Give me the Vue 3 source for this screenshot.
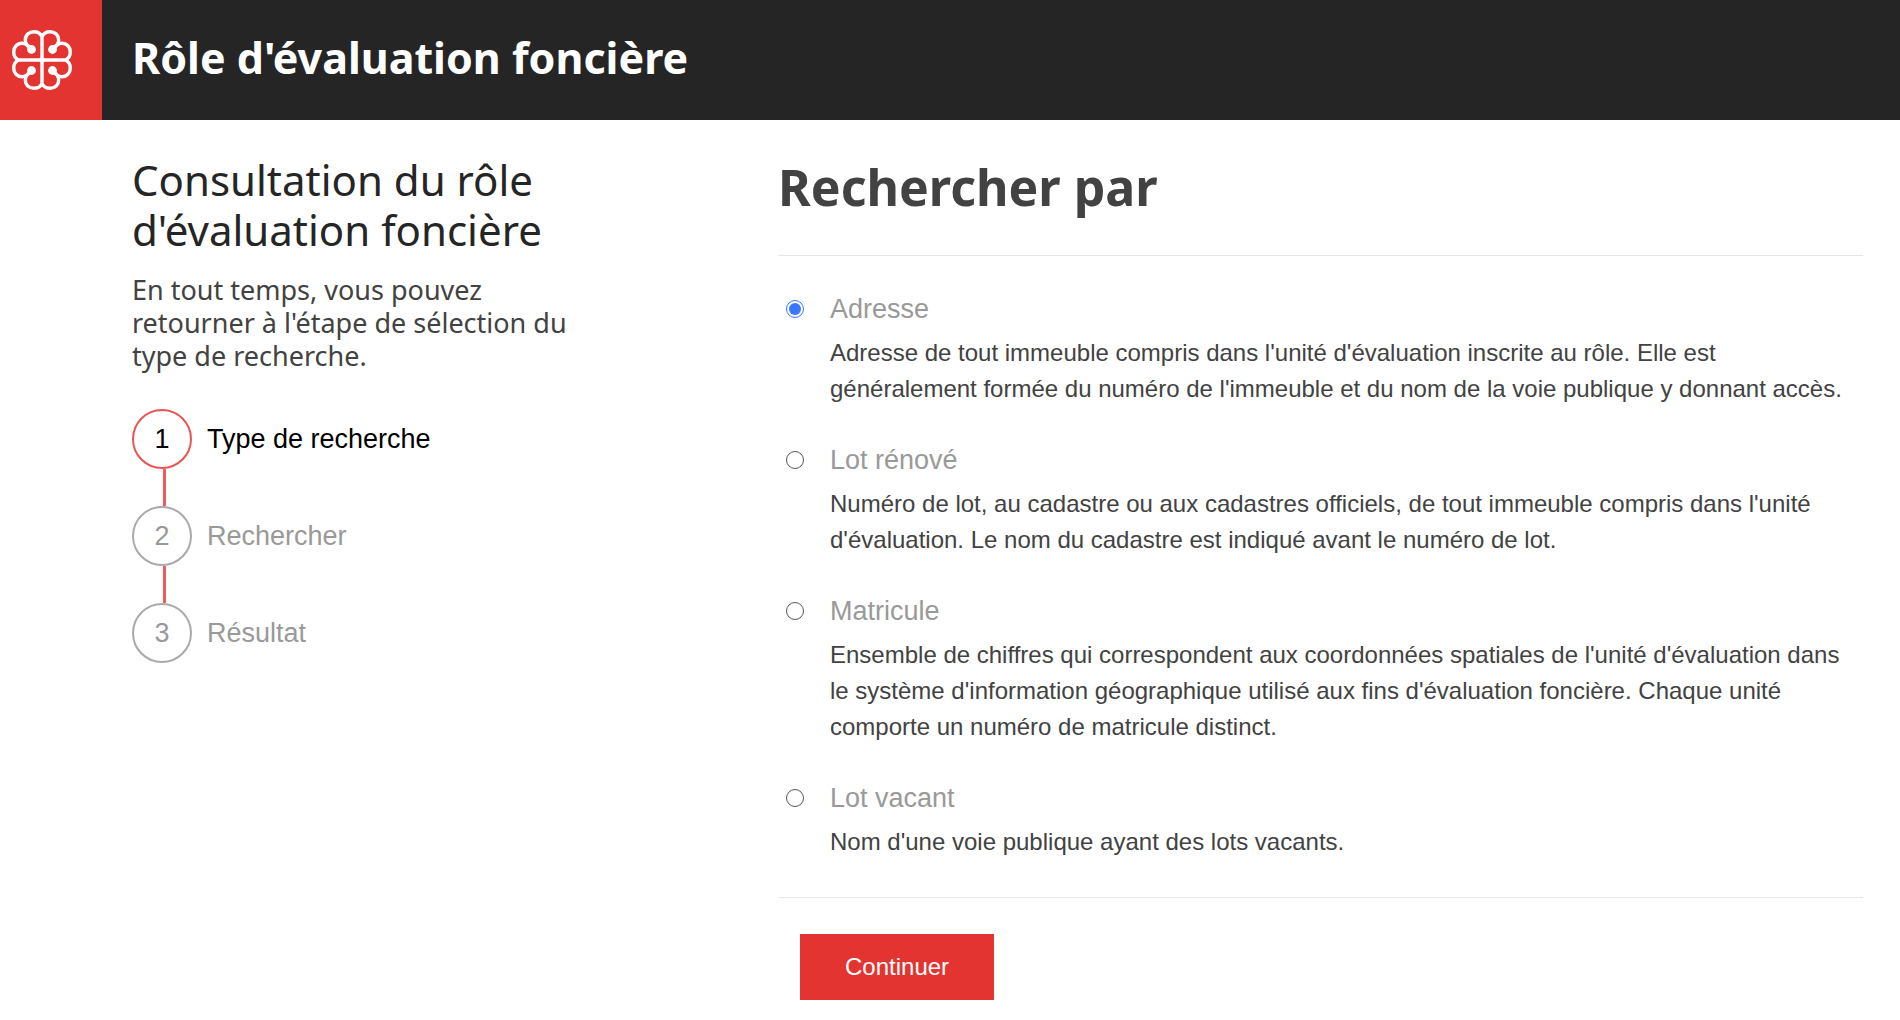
<script setup>
import { ref } from 'vue'

const steps = ['Type de recherche', 'Rechercher', 'Résultat']

const options = [
  {
    id: 'adresse',
    label: 'Adresse',
    text: "Adresse de tout immeuble compris dans l'unité d'évaluation inscrite au rôle. Elle est généralement formée du numéro de l'immeuble et du nom de la voie publique y donnant accès."
  },
  {
    id: 'lot-renove',
    label: 'Lot rénové',
    text: "Numéro de lot, au cadastre ou aux cadastres officiels, de tout immeuble compris dans l'unité d'évaluation. Le nom du cadastre est indiqué avant le numéro de lot."
  },
  {
    id: 'matricule',
    label: 'Matricule',
    text: "Ensemble de chiffres qui correspondent aux coordonnées spatiales de l'unité d'évaluation dans le système d'information géographique utilisé aux fins d'évaluation foncière. Chaque unité comporte un numéro de matricule distinct."
  },
  {
    id: 'lot-vacant',
    label: 'Lot vacant',
    text: "Nom d'une voie publique ayant des lots vacants."
  }
]

const selected = ref('adresse')
const activeStep = ref(0)

// The rosette is one quarter mirrored around its centre
const quarters = [
  'scale(1 1)',
  'translate(60 0) scale(-1 1)',
  'translate(0 60) scale(1 -1)',
  'translate(60 60) scale(-1 -1)'
]
</script>

<template>
  <header class="topbar">
    <a class="logo" href="#" aria-label="Montréal">
      <svg viewBox="0 0 60 60" width="60" height="60" aria-hidden="true">
        <g fill="none" stroke="#fff" stroke-width="3.4">
          <path d="M30 5V55M5 30H55" />
          <g v-for="quarter in quarters" :key="quarter" :transform="quarter">
            <path d="M30 6.500C28.500 3.500 26 1.700 22 1.700C17 1.700 13.300 5.200 13.300 10C13.300 13.500 15 16 19 19" />
            <path d="M6.500 30C3.500 28.500 1.700 26 1.700 22C1.700 17 5.200 13.300 10 13.300C13.500 13.300 16 15 19 19" />
            <circle cx="19.500" cy="19.500" r="4.400" fill="#fff" stroke="none" />
            <path d="M30 26L30 30H26Z" fill="#fff" stroke="none" />
          </g>
        </g>
      </svg>
    </a>
    <h1 class="title">Rôle d'évaluation foncière</h1>
  </header>

  <main class="page">
    <aside class="sidebar">
      <h2 class="intro-title">Consultation du rôle d'évaluation foncière</h2>
      <p class="intro">En tout temps, vous pouvez retourner à l'étape de sélection du type de recherche.</p>
      <ol class="steps">
        <li
          v-for="(step, index) in steps"
          :key="step"
          class="step"
          :class="{ active: index === activeStep }"
        >
          <span class="number">{{ index + 1 }}</span>
          <span>{{ step }}</span>
        </li>
      </ol>
    </aside>

    <form class="search" @submit.prevent>
      <h2 id="search-title" class="search-title">Rechercher par</h2>
      <div class="options" role="radiogroup" aria-labelledby="search-title">
        <div v-for="option in options" :key="option.id" class="option">
          <input
            :id="option.id"
            v-model="selected"
            class="radio"
            type="radio"
            name="type"
            :value="option.id"
            :aria-describedby="option.id + '-text'"
          />
          <div>
            <label class="label" :for="option.id">{{ option.label }}</label>
            <p :id="option.id + '-text'" class="text">{{ option.text }}</p>
          </div>
        </div>
      </div>
      <button class="submit" type="submit">Continuer</button>
    </form>
  </main>
</template>

<style>
body {
  margin: 0;
  background: #fff;
}
</style>

<style scoped>
.topbar {
  display: flex;
  align-items: stretch;
  min-height: 120px;
  background: #252525;
}

.logo {
  display: flex;
  align-items: center;
  box-sizing: border-box;
  flex: none;
  width: 102px;
  padding-left: 12px;
  background: #e33431;
}

.title {
  margin: 28px 30px;
  color: #fff;
  font: bold 43px/60px "Noto Sans", sans-serif;
}

.page {
  display: grid;
  grid-template-columns: minmax(0, 646fr) minmax(0, 1085fr);
  padding: 35px 37px 20px 132px;
  color: #424242;
  font-family: "Liberation Sans", Arial, sans-serif;
}

.sidebar {
  max-width: 470px;
}

.intro-title {
  margin: 0;
  color: #252525;
  font: 400 42px/50px "Noto Sans", sans-serif;
}

.intro {
  margin: 18px 0 37px;
  font: 27px/33px "Noto Sans", sans-serif;
}

.steps {
  display: flex;
  flex-direction: column;
  gap: 37px;
  margin: 0;
  padding: 0;
  list-style: none;
}

.step {
  position: relative;
  display: flex;
  align-items: center;
  gap: 15px;
  color: #999;
  font-size: 27px;
}

.step.active {
  color: #000;
}

.step:not(:last-child)::after {
  content: "";
  position: absolute;
  top: 100%;
  left: 31px;
  width: 3px;
  height: 37px;
  background: #f05a58;
}

.number {
  display: flex;
  align-items: center;
  justify-content: center;
  box-sizing: border-box;
  width: 60px;
  height: 60px;
  border: 2px solid #aaa;
  border-radius: 50%;
}

.active .number {
  border-color: #e95553;
}

.search-title {
  margin: 0;
  padding-bottom: 36px;
  font: bold 50px/64px "Noto Sans", sans-serif;
}

.options {
  display: flex;
  flex-direction: column;
  gap: 35px;
  padding: 35px 0 37px;
  border: solid #e6e6e6;
  border-width: 1px 0;
}

.option {
  display: grid;
  grid-template-columns: 18px minmax(0, 1fr);
  column-gap: 26px;
  padding: 0 18px 0 8px;
}

.radio {
  appearance: none;
  box-sizing: border-box;
  width: 18px;
  height: 18px;
  margin: 9px 0;
  border: 1px solid #555;
  border-radius: 50%;
  background: #fff;
}

.radio:checked {
  border-color: #3b76ff;
  background: #3b76ff content-box;
  padding: 2px;
}

.label {
  display: block;
  color: #999;
  font-size: 27px;
  line-height: 36px;
}

.text {
  margin: 8px 0 0;
  font-size: 24px;
  line-height: 36px;
}

.submit {
  height: 66px;
  margin: 36px 22px 0;
  padding: 0 45px;
  border: 0;
  background: #e33431;
  color: #fff;
  font: 24px "Liberation Sans", Arial, sans-serif;
  cursor: pointer;
}

@media (max-width: 1000px) {
  .page {
    grid-template-columns: minmax(0, 1fr);
    row-gap: 40px;
    padding: 30px;
  }
}
</style>
